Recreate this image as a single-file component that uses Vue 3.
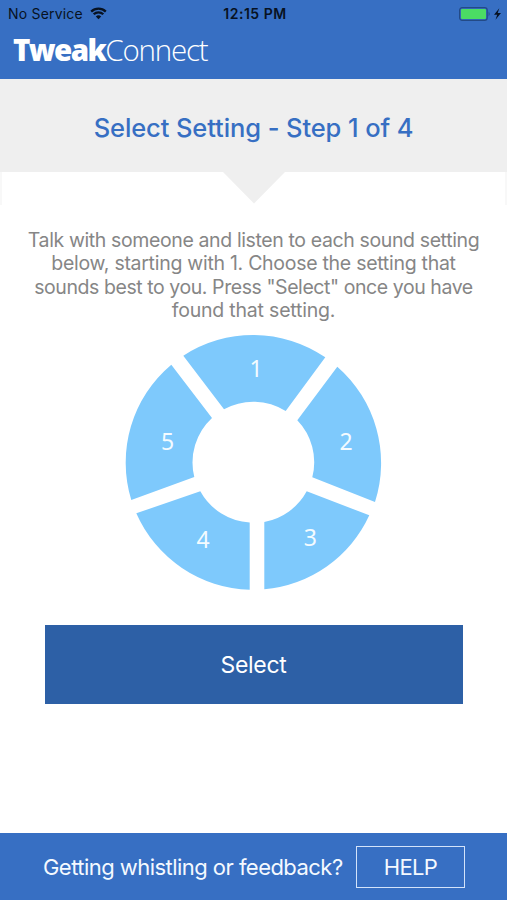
<script setup>
const instructions = [
  'Talk with someone and listen to each sound setting',
  'below, starting with 1. Choose the setting that',
  'sounds best to you. Press "Select" once you have',
  'found that setting.',
]

const segments = [
  { label: '1', x: 256, y: 376.5, path: 'M183.3 355.7A127.8 127.8 0 0 1 325.3 357.3L285.7 411A60.5 60.5 0 0 0 224 409.3Z' },
  { label: '2', x: 346, y: 450, path: 'M337.3 366.7A127.8 127.8 0 0 1 375 502L312.3 477.3A60.5 60.5 0 0 0 297.3 420.3Z' },
  { label: '3', x: 310.3, y: 546, path: 'M369.3 515.3A127.8 127.8 0 0 1 264.3 589.3V522A60.5 60.5 0 0 0 306.7 491.3Z' },
  { label: '4', x: 203, y: 547.5, path: 'M249.7 589.7A127.8 127.8 0 0 1 136.3 513.3L200.3 491.3A60.5 60.5 0 0 0 249.7 522.5Z' },
  { label: '5', x: 167.7, y: 450, path: 'M131.3 500A127.8 127.8 0 0 1 171.3 364.7L212 418A60.5 60.5 0 0 0 194.3 477Z' },
]
</script>

<template>
  <div class="screen">
    <header class="header">
      <div class="status">
        <div class="carrier">
          <span class="carrier-name">No Service</span>
          <svg class="wifi" viewBox="0 0 17 13">
            <path d="M1.2 4.6a10.4 10.4 0 0 1 14.6 0" />
            <path d="M3.7 7.3a6.8 6.8 0 0 1 9.6 0" />
            <path class="dot" d="M5.8 9.5a3.8 3.8 0 0 1 5.4 0L8.5 12.2Z" />
          </svg>
        </div>
        <span class="clock">12:15 PM</span>
        <svg class="battery" viewBox="0 0 43 14">
          <rect class="shell" x="0.6" y="0.6" width="27.6" height="12.8" rx="2.6" />
          <rect class="charge" x="2" y="2" width="25" height="10" rx="1" />
          <path class="cap" d="M29.6 4.6q2 2.4 0 4.8Z" />
          <path class="bolt" d="M40.3 1.2L35 7.8h3.2L36.5 12.8L42 6.1h-3.3Z" />
        </svg>
      </div>
      <div class="logo"><span class="logo-bold">Tweak</span><span class="logo-light">Connect</span></div>
    </header>

    <section class="step">
      <h1 class="step-title">Select Setting - Step 1 of 4</h1>
    </section>
    <div class="notch">
      <svg class="arrow" viewBox="0 0 62 32"><path d="M0 0H62L31 31.5Z" /></svg>
    </div>

    <main class="content">
      <p class="instructions">
        <span v-for="line in instructions" :key="line" class="line">{{ line }}</span>
      </p>
      <svg class="wheel" viewBox="125 334 258 257">
        <g v-for="s in segments" :key="s.label">
          <path class="segment" :d="s.path" />
          <text class="number" :x="s.x" :y="s.y">{{ s.label }}</text>
        </g>
      </svg>
      <button class="select">Select</button>
    </main>

    <footer class="footer">
      <span class="question">Getting whistling or feedback?</span>
      <button class="help">HELP</button>
    </footer>
  </div>
</template>

<style>
body {
  margin: 0;
  background: #fff;
}
</style>

<style scoped>
.screen {
  width: 507px;
  height: 900px;
  overflow: hidden;
  display: flex;
  flex-direction: column;
  background: #fff;
  font-family: Inter, "Liberation Sans", sans-serif;
}
.header {
  flex: none;
  box-sizing: border-box;
  height: 79px;
  background: #376fc3;
}
.status {
  display: grid;
  grid-template-columns: 1fr auto 1fr;
  align-items: center;
  height: 27px;
  padding: 0 5px 0 8px;
  color: #071222;
}
.carrier {
  display: flex;
  align-items: center;
  gap: 7px;
}
.carrier-name {
  font-size: 14px;
  letter-spacing: 0.2px;
  white-space: nowrap;
}
.wifi {
  width: 17px;
  height: 13px;
  fill: none;
  stroke: #071222;
  stroke-width: 2.3;
}
.wifi .dot {
  fill: #071222;
  stroke: none;
}
.clock {
  font-size: 14px;
  font-weight: 600;
  letter-spacing: 0.5px;
  white-space: nowrap;
}
.battery {
  width: 43px;
  height: 14px;
  justify-self: end;
}
.shell {
  fill: none;
  stroke: #234a86;
  stroke-width: 1.2;
}
.charge {
  fill: #4bdc64;
}
.cap {
  fill: #234a86;
}
.bolt {
  fill: #071222;
}
.logo {
  display: flex;
  padding-left: 13px;
  height: 45px;
  line-height: 45px;
  color: #fff;
  font-family: "Open Sans", "Noto Sans", sans-serif;
  font-size: 29.5px;
}
.logo-bold {
  font-weight: 800;
  letter-spacing: -1.6px;
}
.logo-light {
  font-weight: 300;
  letter-spacing: -1.2px;
}
.step {
  flex: none;
  display: flex;
  align-items: center;
  justify-content: center;
  height: 93px;
  background: #efefef;
}
.step-title {
  margin: 0;
  padding-top: 4px;
  font-size: 25.5px;
  font-weight: 500;
  line-height: 32px;
  letter-spacing: -0.1px;
  color: #376fc3;
  white-space: nowrap;
}
.notch {
  flex: none;
  box-sizing: border-box;
  display: flex;
  justify-content: center;
  height: 33px;
  border: solid #f8f8f8;
  border-width: 0 2px;
}
.arrow {
  width: 62px;
  height: 32px;
  fill: #efefef;
}
.content {
  flex: 1;
  display: flex;
  flex-direction: column;
  align-items: center;
}
.instructions {
  display: flex;
  flex-direction: column;
  align-items: center;
  margin: 24px 0 0;
  font-size: 19.5px;
  line-height: 23.25px;
  letter-spacing: -0.38px;
  color: #868686;
  white-space: nowrap;
}
.line:nth-child(2) {
  letter-spacing: -0.28px;
}
.line:nth-child(3) {
  letter-spacing: -0.43px;
}
.line:nth-child(4) {
  letter-spacing: -0.2px;
}
.wheel {
  width: 258px;
  height: 257px;
  margin: 12px 0 0 1px;
}
.segment {
  fill: #7ec9fc;
}
.number {
  fill: #f4fbff;
  font-family: "Noto Sans", "Open Sans", sans-serif;
  font-size: 23px;
  text-anchor: middle;
}
.select {
  width: 418px;
  height: 79px;
  margin-top: 34px;
  padding: 0;
  border: 0;
  background: #2d60a6;
  color: #fff;
  font-family: inherit;
  font-size: 23px;
  letter-spacing: -0.3px;
}
.footer {
  flex: none;
  box-sizing: border-box;
  display: flex;
  align-items: center;
  justify-content: space-between;
  height: 67px;
  padding: 0 42px 0 43px;
  background: #376fc3;
  color: #f4f9ff;
}
.question {
  font-size: 22px;
  letter-spacing: -0.54px;
  white-space: nowrap;
}
.help {
  flex: none;
  box-sizing: border-box;
  width: 109px;
  height: 42px;
  padding: 0;
  border: 1px solid #d3e3fa;
  background: transparent;
  color: inherit;
  font-family: inherit;
  font-size: 22px;
  letter-spacing: -0.7px;
}
</style>
